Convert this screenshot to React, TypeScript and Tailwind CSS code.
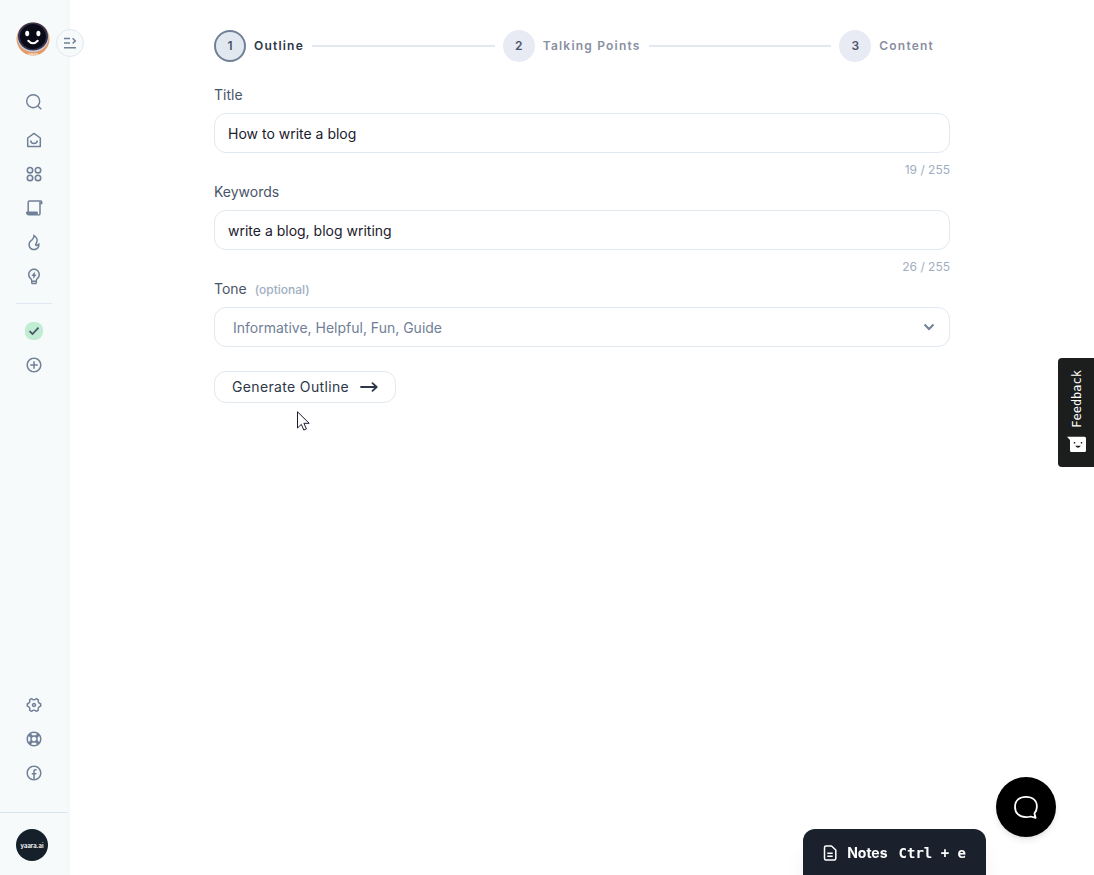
import { useState } from "react"
import type { ReactNode } from "react"
import {
  RiAddCircleLine,
  RiFacebookCircleLine,
  RiFireLine,
  RiLifebuoyLine,
  RiLightbulbFlashLine,
  RiSettings4Line,
} from "react-icons/ri"

const MAX = 255

const RobotLogo = () => (
  <svg viewBox="0 0 34 34" className="size-[34px]">
    <circle cx="17" cy="17" r="16.5" fill="#e39a66" />
    <ellipse cx="17" cy="16" rx="15.5" ry="14" fill="#cdd0dc" />
    <ellipse cx="17" cy="14.5" rx="15" ry="14" fill="#34344f" />
    <ellipse cx="17" cy="14.5" rx="13" ry="12.5" fill="#0b0b17" />
    <ellipse cx="11.2" cy="11.5" rx="2" ry="2.8" fill="#fff" />
    <ellipse cx="22.4" cy="11.5" rx="2" ry="2.8" fill="#fff" />
    <path d="M12.3 18.8q4.7 5 9.4 0" fill="none" stroke="#fff" strokeWidth="2" strokeLinecap="round" />
    <path d="M12.5 31.7q4.5 1 9 0" fill="none" stroke="#f8e3d3" strokeWidth="1.5" strokeDasharray="2 .5" />
  </svg>
)

const SearchIcon = () => (
  <svg viewBox="0 0 18 18" className="size-[18px]" fill="none" stroke="currentColor" strokeWidth="1.4">
    <circle cx="8.2" cy="8.2" r="6.5" />
    <path d="M12.9 12.9 16.3 16.3" />
  </svg>
)

const HomeIcon = () => (
  <svg viewBox="0 0 18 18" className="size-[18px]" fill="none" stroke="currentColor" strokeWidth="1.5">
    <path d="M2.7 7 9 2.4 15.3 7v8.5H2.7z" strokeLinejoin="round" />
    <path d="M5.8 9.5a3.2 3 0 0 0 6.4 0" />
  </svg>
)

const AppsIcon = () => (
  <svg viewBox="0 0 18 18" className="size-[18px]" fill="none" stroke="currentColor" strokeWidth="1.6">
    <circle cx="5" cy="5.2" r="2.7" />
    <circle cx="13" cy="5.2" r="2.7" />
    <circle cx="5" cy="12.9" r="2.7" />
    <circle cx="13" cy="12.9" r="2.7" />
  </svg>
)

const ScrollIcon = () => (
  <svg viewBox="0 0 18 18" className="size-[18px]" fill="none" stroke="currentColor" strokeWidth="1.5">
    <path d="M3.2 13V3.2q0-1.2 1.2-1.2h11.4q.9 0 .9.9V4.5h-2" />
    <path d="M15 2.5V14.5q0 1.5-1.5 1.5" />
    <path d="M1.5 13h10.8v1.5q0 1 1.2 1.5H3.5q-2 0-2-2z" fill="currentColor" strokeWidth="1" />
  </svg>
)

const NavButton = ({ label, children }: { label: string; children: ReactNode }) => (
  <button type="button" aria-label={label} className="flex size-[18px] items-center justify-center">
    {children}
  </button>
)

const Sidebar = () => (
  <aside className="sticky top-0 z-10 flex h-screen w-[68px] shrink-0 flex-col items-center bg-[#f6fafb] text-[#718096] shadow-[0_0_3px_rgba(45,55,72,0.15)]">
    <a href="#home" aria-label="Home" className="mt-[22px] mr-0.5">
      <RobotLogo />
    </a>
    <button
      type="button"
      aria-label="Expand sidebar"
      className="absolute top-[29px] left-14 flex size-7 items-center justify-center rounded-full border border-slate-200 bg-[#f6fafb]"
    >
      <svg viewBox="0 0 14 12" className="h-3 w-3.5" fill="none" stroke="currentColor" strokeWidth="1.5">
        <path d="M1 1.5h6M1 6h6M1 10.7h12M9.6 1.2 12.3 3.9 9.6 6.5" />
      </svg>
    </button>

    <nav className="mt-[37px] flex w-full flex-col items-center gap-4">
      <div className="mb-1 flex">
        <NavButton label="Search"><SearchIcon /></NavButton>
      </div>
      <NavButton label="Dashboard"><HomeIcon /></NavButton>
      <NavButton label="Templates"><AppsIcon /></NavButton>
      <NavButton label="Documents"><ScrollIcon /></NavButton>
      <NavButton label="Trending"><RiFireLine size={18} /></NavButton>
      <NavButton label="Ideas"><RiLightbulbFlashLine size={18} /></NavButton>
      <hr className="my-0.5 w-9 border-slate-200" />
      <NavButton label="Current project">
        <span className="flex size-[18px] items-center justify-center rounded-lg bg-[#c0ecd3] text-[#4a5568]">
          <svg viewBox="0 0 12 10" className="h-2.5 w-3" fill="none" stroke="currentColor" strokeWidth="1.8">
            <path d="M1.5 5.2 4.5 8 10.5 1.7" />
          </svg>
        </span>
      </NavButton>
      <NavButton label="New project"><RiAddCircleLine size={18} /></NavButton>
    </nav>

    <div className="mt-auto mb-[30px] flex flex-col items-center gap-4">
      <NavButton label="Settings"><RiSettings4Line size={18} /></NavButton>
      <NavButton label="Help"><RiLifebuoyLine size={18} /></NavButton>
      <NavButton label="Facebook"><RiFacebookCircleLine size={18} /></NavButton>
    </div>

    <div className="flex w-full border-t border-[#dbe5f0] px-4 pt-4 pb-3.5">
      <button
        type="button"
        className="flex size-8 items-center justify-center rounded-full bg-[#15202b] text-[6px] font-semibold text-white"
      >
        yaara.ai
      </button>
    </div>
  </aside>
)

const Step = ({ n, label, active = false }: { n: number; label: string; active?: boolean }) => (
  <li aria-current={active ? "step" : undefined} className="flex items-center gap-2">
    <span
      className={
        active
          ? "flex size-8 items-center justify-center rounded-full border-2 border-[#718096] bg-slate-200 text-xs font-semibold text-[#4a5568]"
          : "flex size-8 items-center justify-center rounded-full bg-[#e8ebf3] text-xs font-semibold text-[#4a5568]"
      }
    >
      {n}
    </span>
    <span
      className={
        active
          ? "text-xs font-semibold tracking-widest text-[#2d3748]"
          : "text-xs font-semibold tracking-widest text-[#8a8fa0]"
      }
    >
      {label}
    </span>
  </li>
)

const StepLine = () => <li aria-hidden="true" className="h-0.5 flex-1 bg-[#e2e8f0]" />

type TextFieldProps = {
  id: string
  label: string
  value: string
  onChange: (value: string) => void
}

const TextField = ({ id, label, value, onChange }: TextFieldProps) => (
  <div className="flex flex-col">
    <label htmlFor={id} className="text-sm text-[#4a5568]">
      {label}
    </label>
    <input
      id={id}
      type="text"
      maxLength={MAX}
      value={value}
      onChange={(e) => onChange(e.target.value)}
      className="mt-2 h-10 w-full rounded-xl border border-slate-200 bg-white px-[13px] text-sm text-[#1a202c] outline-none focus:border-slate-400"
    />
    <span className="mt-[9px] self-end text-xs text-[#a0aec0]">
      {value.length} / {MAX}
    </span>
  </div>
)

const FeedbackTab = () => (
  <button
    type="button"
    className="fixed top-[358px] right-0 flex w-9 flex-col items-center gap-2 rounded-l-sm bg-[#1c1d1d] pt-3 pb-3.5 pl-0.5 text-white"
  >
    <span className="rotate-180 font-['DejaVu_Sans_Mono',monospace] text-xs [writing-mode:vertical-rl]">
      Feedback
    </span>
    <svg viewBox="0 0 20 17" className="h-[17px] w-5">
      <path d="M0 .8h17.500q1.500 0 1.500 1.500v12.200q0 1.500-1.500 1.500h-13q-1.500 0-1.500-1.500V4z" fill="#fff" />
      <path d="M7.500 6v1.600M14.500 6v1.600" stroke="#1c1d1d" strokeWidth="1.4" />
      <path d="M8.200 9.800h5.600q-2.800 4-5.600 0z" fill="#1c1d1d" />
    </svg>
  </button>
)

const ChatButton = () => (
  <button
    type="button"
    aria-label="Open chat"
    className="fixed right-[38px] bottom-[38px] flex size-15 items-center justify-center rounded-full bg-black text-white shadow-md"
  >
    <svg viewBox="0 0 26 24" className="h-6 w-[26px]" fill="none" stroke="currentColor" strokeWidth="1.8">
      <path
        d="M13 1.800C19.500 1.800 23.900 5.300 23.900 11.500c0 3-.9 5.200-2.500 6.900l1.200 4.400-4.800-1.300c-1.500.4-3.100.6-4.800.6C6.400 22.100 2 18.300 2 11.900 2 5.300 6.600 1.800 13 1.800z"
        strokeLinejoin="round"
      />
    </svg>
  </button>
)

const NotesButton = () => (
  <button
    type="button"
    className="fixed right-[108px] bottom-0 flex h-[46px] items-center rounded-t-xl bg-[#1a202c] px-5 pt-0.5 text-sm text-white shadow-xl"
  >
    <svg viewBox="0 0 14 16" className="h-4 w-3.5" fill="none" stroke="currentColor" strokeWidth="1.5">
      <path
        d="M3 1h5.500L12.800 5v8.500q0 1.500-1.500 1.500H3q-1.500 0-1.500-1.500v-11Q1.500 1 3 1z"
        strokeLinejoin="round"
      />
      <path d="M4.300 8.300h5.400M4.300 11.300h5.400" />
    </svg>
    <span className="ml-2.5 font-bold">Notes</span>
    <kbd className="ml-[11px] font-['DejaVu_Sans_Mono',monospace] text-sm font-bold">Ctrl + e</kbd>
  </button>
)

const Pointer = () => (
  <svg viewBox="0 0 13 20" className="pointer-events-none absolute top-10 left-[83px] h-5 w-[13px]">
    <path
      d="M.5.8v16.200l3.800-3.600 2.500 5.600 2.600-1.100-2.500-5.600h5.300z"
      fill="#fff"
      stroke="#1a1a2e"
      strokeLinejoin="round"
    />
  </svg>
)

export default function App() {
  const [title, setTitle] = useState("How to write a blog")
  const [keywords, setKeywords] = useState("write a blog, blog writing")

  return (
    <div className="flex min-h-screen bg-white font-['Inter',sans-serif]">
      <Sidebar />

      <main className="flex-1 pt-[30px] pr-8 pl-[34px]">
        <div className="mx-auto max-w-[736px]">
          <ol className="flex items-center gap-2 pr-4">
            <Step n={1} label="Outline" active />
            <StepLine />
            <Step n={2} label="Talking Points" />
            <StepLine />
            <Step n={3} label="Content" />
          </ol>

          <form className="mt-[23px] flex flex-col gap-1" onSubmit={(e) => e.preventDefault()}>
            <TextField id="title" label="Title" value={title} onChange={setTitle} />
            <TextField id="keywords" label="Keywords" value={keywords} onChange={setKeywords} />

            <div className="flex flex-col">
              <label htmlFor="tone" className="text-sm text-[#4a5568]">
                Tone <span className="ml-1 text-xs font-medium text-[#a0aec0]">(optional)</span>
              </label>
              <div className="relative mt-2">
                <select
                  id="tone"
                  className="h-10 w-full appearance-none rounded-xl border border-slate-200 bg-white px-[18px] pt-0.5 text-sm text-[#718096] outline-none focus:border-slate-400"
                >
                  <option>Informative, Helpful, Fun, Guide</option>
                </select>
                <svg
                  viewBox="0 0 12 8"
                  className="pointer-events-none absolute top-4 right-[15px] h-2 w-3 text-[#718096]"
                  fill="none"
                  stroke="currentColor"
                  strokeWidth="2"
                >
                  <path d="M1.500 1.500 6 6 10.500 1.500" />
                </svg>
              </div>
            </div>

            <div className="relative mt-5">
              <button
                type="submit"
                className="flex h-8 items-center gap-[11px] rounded-xl border border-slate-200 bg-white px-[17px] text-sm tracking-wide text-[#2d3748]"
              >
                Generate Outline
                <svg viewBox="0 0 18 10" className="h-2.5 w-[18px]" fill="none" stroke="currentColor" strokeWidth="1.8">
                  <path d="M1 5h15.500M12.500 1.200 16.700 5l-4.200 3.800" strokeLinecap="round" strokeLinejoin="round" />
                </svg>
              </button>
              <Pointer />
            </div>
          </form>
        </div>
      </main>

      <FeedbackTab />
      <ChatButton />
      <NotesButton />
    </div>
  )
}
